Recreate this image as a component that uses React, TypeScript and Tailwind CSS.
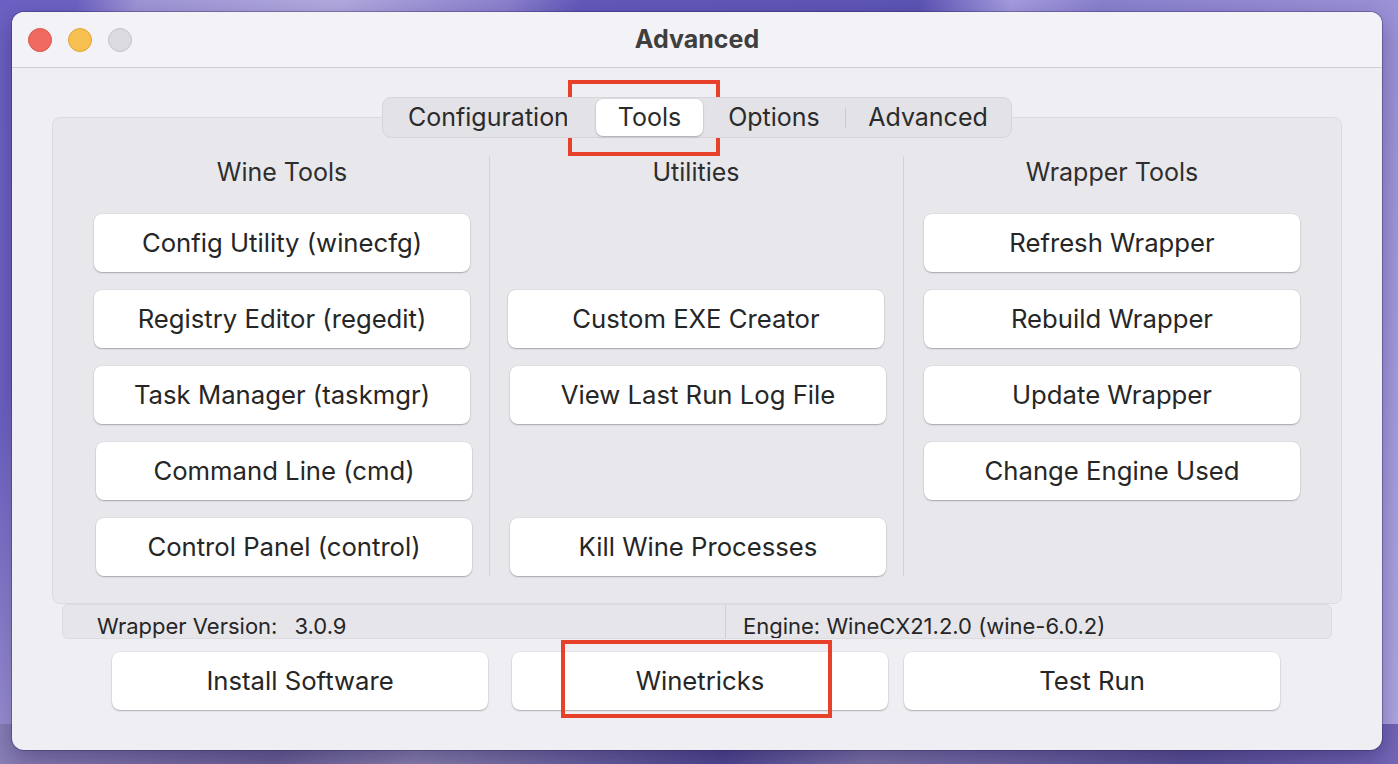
import React from 'react';

const FONT = 'font-["Inter","Noto_Sans",sans-serif]';

type BtnProps = { label?: string; className?: string };

function Btn({ label, className = '' }: BtnProps) {
  if (!label) return <div className={`h-[58px] w-[376px] ${className}`} />;
  return (
    <div
      className={`flex h-[58px] w-[376px] shrink-0 items-center justify-center rounded-[8px] bg-white pt-[1px] text-[25.7px] text-[#262626] shadow-[0_1px_1.5px_rgba(0,0,0,0.25),0_0_0_0.5px_rgba(0,0,0,0.07)] ${className}`}
    >
      {label}
    </div>
  );
}

function Column({ title, rows }: { title: string; rows: { label?: string; shift?: boolean }[] }) {
  return (
    <div className="flex w-[376px] shrink-0 flex-col">
      <div className="flex h-[34px] items-center justify-center text-[25px] text-[#2e2e2e]">{title}</div>
      <div className="mt-[24px] flex flex-col gap-[18px]">
        {rows.map((r, i) => (
          <Btn key={i} label={r.label} className={r.shift ? 'ml-[2px]' : ''} />
        ))}
      </div>
    </div>
  );
}

const Divider = () => <div className="w-px shrink-0 self-stretch bg-[#d3d2d7]" />;

export default function App() {
  return (
    <div
      className={`relative h-[764px] w-[1398px] overflow-hidden bg-[linear-gradient(100deg,#6c61c3_0%,#6e63c4_5%,#9f96d6_9%,#b3abe0_22%,#8c82cf_33%,#6359bb_38%,#5e55b5_60%,#a59de0_66%,#8b82cf_72%,#9c93d8_92%,#b0a8e3_100%)] pt-[12px] pl-[12px] ${FONT}`}
    >
      <div className="pointer-events-none absolute inset-x-0 bottom-0 h-[40px] bg-[linear-gradient(100deg,#8a80b8_0%,#6b6199_20%,#8a82b0_30%,#504893_52%,#7e75ac_62%,#5b5299_85%,#7466b8_100%)]" />

      {/* window */}
      <div className="relative flex h-[738px] w-[1370px] flex-col overflow-hidden rounded-[12px] bg-[#efeef3] shadow-[0_0_0_1px_rgba(40,30,90,0.35),0_8px_24px_rgba(20,10,60,0.35)]">
        {/* title bar */}
        <div className="relative flex h-[56px] shrink-0 items-center border-b border-[#cfced4] bg-[#f3f2f7] pl-[16px]">
          <div className="flex gap-[16px]">
            <span className="h-[24px] w-[24px] rounded-full border border-[#d9574f] bg-[#ef6a5f]" />
            <span className="h-[24px] w-[24px] rounded-full border border-[#dea73a] bg-[#f6bf4f]" />
            <span className="h-[24px] w-[24px] rounded-full border border-[#c5c4c9] bg-[#dcdbe0]" />
          </div>
          <div className="absolute inset-0 flex items-center justify-center text-[25px] font-bold text-[#3f3f3f]">
            Advanced
          </div>
        </div>

        {/* tab bar */}
        <div className="relative z-10 mt-[29px] flex h-[41px] items-center self-center rounded-[9px] border border-[#d6d5da] bg-[#e3e2e7] px-[1px] text-[25px] text-[#2b2b2b]">
          <div className="flex w-[212px] pl-[24px]">
            <span className="block w-[159px] overflow-hidden whitespace-nowrap">Configuration</span>
          </div>
          <div className="flex h-[37px] w-[107px] items-center justify-center rounded-[7px] bg-white shadow-[0_1px_2px_rgba(0,0,0,0.22),0_0_0_0.5px_rgba(0,0,0,0.06)]">
            Tools
          </div>
          <div className="flex w-[142px] justify-center">Options</div>
          <div className="h-[20px] w-px bg-[#cbcad0]" />
          <div className="flex w-[164px] justify-center">Advanced</div>
        </div>

        {/* group box */}
        <div className="mx-[40px] mt-[-21px] flex rounded-[8px] border border-[#dcdbe0] bg-[#e8e7ec] pt-[38px] pb-[27px] pl-[41px]">
          <Column
            title="Wine Tools"
            rows={[
              { label: 'Config Utility (winecfg)' },
              { label: 'Registry Editor (regedit)' },
              { label: 'Task Manager (taskmgr)' },
              { label: 'Command Line (cmd)', shift: true },
              { label: 'Control Panel (control)', shift: true },
            ]}
          />
          <div className="ml-[19px] flex">
            <Divider />
          </div>
          <div className="ml-[18px]">
            <Column
              title="Utilities"
              rows={[
                {},
                { label: 'Custom EXE Creator' },
                { label: 'View Last Run Log File', shift: true },
                {},
                { label: 'Kill Wine Processes', shift: true },
              ]}
            />
          </div>
          <div className="ml-[19px] flex">
            <Divider />
          </div>
          <div className="ml-[20px]">
            <Column
              title="Wrapper Tools"
              rows={[
                { label: 'Refresh Wrapper' },
                { label: 'Rebuild Wrapper' },
                { label: 'Update Wrapper' },
                { label: 'Change Engine Used' },
                {},
              ]}
            />
          </div>
        </div>

        {/* status bar */}
        <div className="mx-[50px] flex h-[35px] shrink-0 overflow-hidden rounded-[6px] border border-[#dcdbe0] bg-[#e6e5ea] text-[22px] leading-[22px] text-[#262626]">
          <div className="flex w-[662px] pt-[10px] pl-[34px]">
            <span>Wrapper Version:</span>
            <span className="ml-[17px]">3.0.9</span>
          </div>
          <div className="w-px bg-[#d0cfd4]" />
          <div className="flex pt-[10px] pl-[17px]">Engine: WineCX21.2.0 (wine-6.0.2)</div>
        </div>

        {/* bottom buttons */}
        <div className="mt-[13px] ml-[100px] flex">
          <Btn label="Install Software" />
          <Btn label="Winetricks" className="ml-[24px]" />
          <Btn label="Test Run" className="ml-[16px]" />
        </div>
      </div>

      {/* annotations */}
      <div className="pointer-events-none absolute left-[568px] top-[80px] h-[76px] w-[152px] border-[4px] border-[#e8412b]" />
      <div className="pointer-events-none absolute left-[561px] top-[640px] h-[78px] w-[271px] border-[4px] border-[#e8412b]" />
    </div>
  );
}
